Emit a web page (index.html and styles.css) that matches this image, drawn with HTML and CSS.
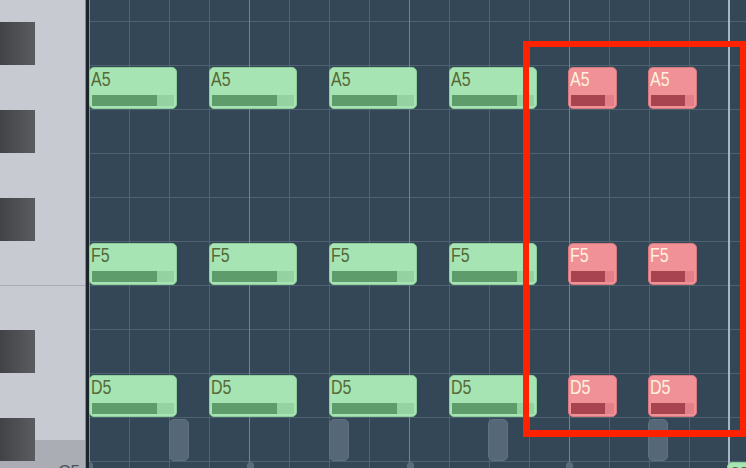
FILE: index.html
```html
<!DOCTYPE html>
<html lang="en">
<head>
    <meta charset="UTF-8">
    <title>Piano Roll</title>
    <link rel="stylesheet" href="styles.css">
</head>
<body>
    <div class="roll">
        <div class="keys">
            <div class="key-row top"></div>
            <div class="key-row"><div class="black-key"></div></div>
            <div class="key-row"></div>
            <div class="key-row"><div class="black-key"></div></div>
            <div class="key-row"></div>
            <div class="key-row"><div class="black-key"></div></div>
            <div class="key-row"></div>
            <div class="key-row e-key"></div>
            <div class="key-row"><div class="black-key"></div></div>
            <div class="key-row"></div>
            <div class="key-row c-sharp"><div class="black-key"></div></div>
            <div class="key-row c-key"><span class="key-label">C5</span></div>
        </div>
        <div class="divider"></div>

        <div class="grid">
            <div class="marker"></div>

            <!-- A5 -->
            <div class="note green" style="left:0;top:67px"><span>A5</span><div class="vel"><i></i></div></div>
            <div class="note green" style="left:120px;top:67px"><span>A5</span><div class="vel"><i></i></div></div>
            <div class="note green" style="left:240px;top:67px"><span>A5</span><div class="vel"><i></i></div></div>
            <div class="note green" style="left:360px;top:67px"><span>A5</span><div class="vel"><i></i></div></div>
            <div class="note red" style="left:479px;top:67px"><span>A5</span><div class="vel"><i></i></div></div>
            <div class="note red" style="left:559px;top:67px"><span>A5</span><div class="vel"><i></i></div></div>

            <!-- F5 -->
            <div class="note green" style="left:0;top:243px"><span>F5</span><div class="vel"><i></i></div></div>
            <div class="note green" style="left:120px;top:243px"><span>F5</span><div class="vel"><i></i></div></div>
            <div class="note green" style="left:240px;top:243px"><span>F5</span><div class="vel"><i></i></div></div>
            <div class="note green" style="left:360px;top:243px"><span>F5</span><div class="vel"><i></i></div></div>
            <div class="note red" style="left:479px;top:243px"><span>F5</span><div class="vel"><i></i></div></div>
            <div class="note red" style="left:559px;top:243px"><span>F5</span><div class="vel"><i></i></div></div>

            <!-- D5 -->
            <div class="note green" style="left:0;top:375px"><span>D5</span><div class="vel"><i></i></div></div>
            <div class="note green" style="left:120px;top:375px"><span>D5</span><div class="vel"><i></i></div></div>
            <div class="note green" style="left:240px;top:375px"><span>D5</span><div class="vel"><i></i></div></div>
            <div class="note green" style="left:360px;top:375px"><span>D5</span><div class="vel"><i></i></div></div>
            <div class="note red" style="left:479px;top:375px"><span>D5</span><div class="vel"><i></i></div></div>
            <div class="note red" style="left:559px;top:375px"><span>D5</span><div class="vel"><i></i></div></div>

            <!-- ghost notes -->
            <div class="ghost" style="left:80px"></div>
            <div class="ghost" style="left:240px"></div>
            <div class="ghost" style="left:399px"></div>
            <div class="ghost" style="left:559px"></div>

            <!-- next row, cut off -->
            <div class="stub" style="left:-3px"></div>
            <div class="stub" style="left:158px"></div>
            <div class="stub" style="left:318px"></div>
            <div class="stub" style="left:477px"></div>
            <div class="note green cut" style="left:638px;top:462px"><span>C5</span></div>

            <div class="highlight"></div>
        </div>
    </div>
</body>
</html>
```

FILE: styles.css
```css
body {
    margin: 0;
    width: 746px;
    height: 468px;
    overflow: hidden;
    background: #344756;
    font-family: "Liberation Sans", Arial, sans-serif;
}
.roll {
    display: flex;
    height: 468px;
}

/* piano keys */
.keys {
    width: 85px;
    display: flex;
    flex-direction: column;
    background: #c7cad1;
    flex-shrink: 0;
}
.key-row {
    height: 44px;
    box-sizing: border-box;
    flex-shrink: 0;
}
.key-row.top {
    height: 21px;
}
.black-key {
    width: 35px;
    height: 43px;
    margin-top: 1px;
    background: linear-gradient(to right, #424347, #5b5c60);
}
.key-row.e-key {
    border-top: 1px solid #a8abb2;
}
.key-row.c-sharp {
    background: linear-gradient(to bottom, #c7cad1 0 23px, #aaadb3 23px);
}
.key-row.c-key {
    background: #aaadb3;
    display: flex;
    justify-content: flex-end;
    padding-right: 5px;
}
.key-label {
    font-size: 17px;
    line-height: 1;
    color: #4d5056;
    margin-top: 2px;
}
.divider {
    width: 3px;
    flex-shrink: 0;
    border-left: 1px solid #858990;
    background: #1b252b;
}

/* note grid */
.grid {
    flex: 1;
    position: relative;
    overflow: hidden;
    background-color: #344756;
    background-image:
        repeating-linear-gradient(to right, #6e8393 0 1px, transparent 1px 160px),
        repeating-linear-gradient(to right, #4e6373 0 1px, transparent 1px 40px),
        repeating-linear-gradient(to bottom, #4d6170 0 1px, transparent 1px 44px);
    background-position: 0 0, 0 0, 0 21px;
}
.grid::before {
    content: "";
    position: absolute;
    left: 0;
    top: 0;
    bottom: 0;
    width: 1px;
    background: #7a8fa0;
}
.marker {
    position: absolute;
    left: 639px;
    top: 0;
    bottom: 0;
    width: 2px;
    background: #a5b7c4;
}

.note {
    position: absolute;
    width: 88px;
    height: 42px;
    box-sizing: border-box;
    border-radius: 5px;
    padding: 2px 2px 2px 1px;
    display: flex;
    flex-direction: column;
    justify-content: space-between;
    align-items: flex-start;
}
.note span {
    display: inline-block;
    font-size: 20px;
    line-height: 18px;
    transform: scaleX(0.8);
    transform-origin: left center;
}
.note .vel {
    height: 11px;
    align-self: stretch;
    margin-left: 1px;
}
.note .vel i {
    display: block;
    width: 79%;
    height: 100%;
}
.note.green {
    background: #a7e4b4;
    border: 1px solid #8ccd9a;
}
.note.green span {
    color: #556a36;
}
.note.green .vel {
    background: #94d2a2;
}
.note.green .vel i {
    background: #5f9c6c;
}
.note.red {
    width: 49px;
    background: #ef9197;
    border: 1px solid #da7880;
}
.note.red span {
    color: #fff1dc;
}
.note.red .vel {
    background: #e28089;
}
.note.red .vel i {
    background: #a8444f;
}
.note.cut {
    height: 30px;
}

.ghost {
    position: absolute;
    top: 419px;
    width: 20px;
    height: 42px;
    box-sizing: border-box;
    border-radius: 5px;
    background: #566877;
    border: 1px solid #607280;
}
.stub {
    position: absolute;
    top: 462px;
    width: 7px;
    height: 12px;
    border-radius: 4px;
    background: #596c7a;
}

.highlight {
    position: absolute;
    left: 434px;
    top: 41px;
    width: 223px;
    height: 396px;
    box-sizing: border-box;
    border: 6px solid #ff2200;
    border-bottom-width: 7px;
}
```
